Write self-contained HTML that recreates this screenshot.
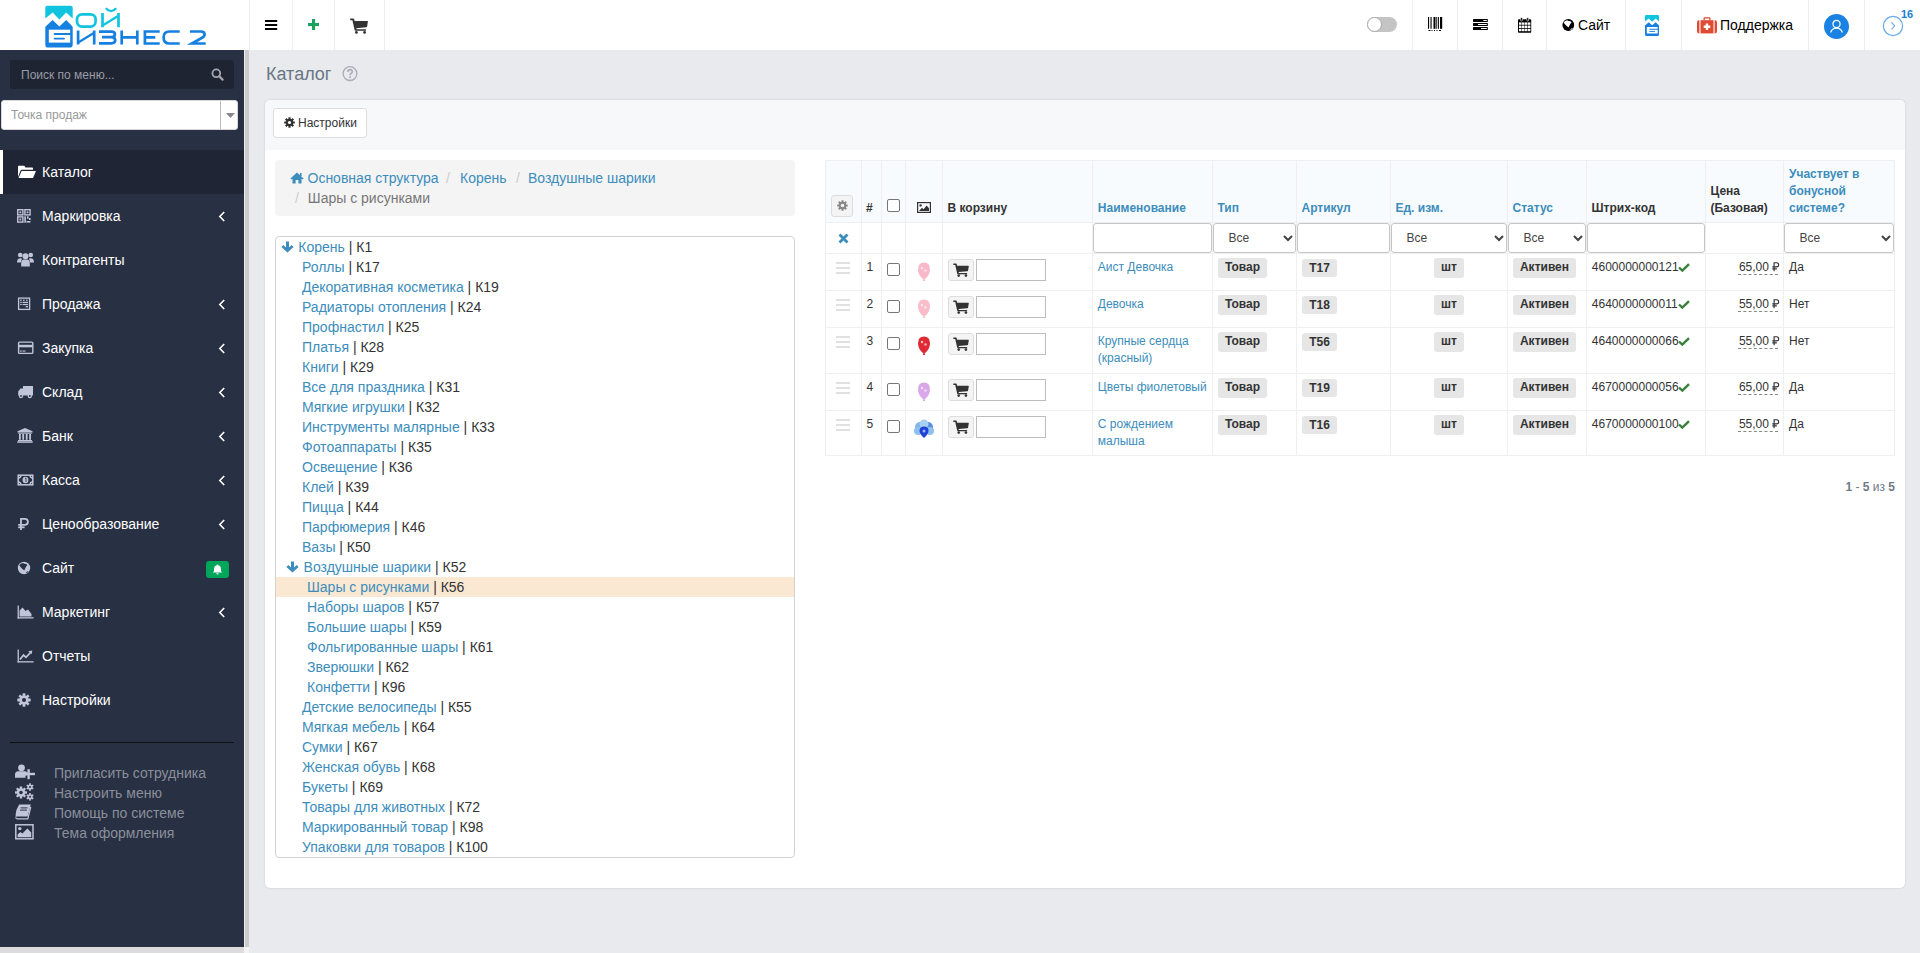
<!DOCTYPE html>
<html><head><meta charset="utf-8">
<style>
*{box-sizing:border-box}
html,body{margin:0;padding:0}
body{width:1920px;height:953px;overflow:hidden;position:relative;background:#e9eaed;font-family:"Liberation Sans",sans-serif;font-size:14px;color:#333}
.abs{position:absolute}
a{color:#3c8dbc;text-decoration:none}
#hdr{position:absolute;left:0;top:0;width:1920px;height:50px;background:#fff}
.vsep{position:absolute;top:0;width:1px;height:50px;background:#eeeeee}
#side{position:absolute;left:0;top:50px;width:244px;height:897px;background:#283043}
#sstrip{position:absolute;left:244px;top:50px;width:5px;height:903px;background:#cbcbcb;border-left:1px solid #eee}
#sbot{position:absolute;left:0;top:947px;width:244px;height:6px;background:#dcdcdc}
#sbot2{position:absolute;left:244px;top:947px;width:5px;height:6px;background:#f4f4f4}
.mi{position:absolute;left:0;width:244px;height:44px;color:#fff;font-size:14px}
.mi .t{position:absolute;left:42px;top:14px;line-height:16px;white-space:nowrap}
.bl{position:absolute;left:54px;font-size:14px;color:#8a8f99;line-height:16px;white-space:nowrap}
#box{position:absolute;left:265px;top:100px;width:1640px;height:788px;background:#fff;border-radius:5px;box-shadow:0 0 2px 0 rgba(40,40,80,.22)}
#boxh{position:absolute;left:0;top:0;width:1640px;height:50px;background:#f7f8fa;border-radius:5px 5px 0 0}
.tr{position:absolute;height:20px;line-height:20px;font-size:14px;white-space:nowrap;color:#333}

</style></head><body>
<div id="hdr">
<svg class="abs" style="left:0;top:0" width="249" height="50" viewBox="0 0 249 50">
 <defs>
  <g id="lgicon">
   <path d="M47.3 5.8 L70.7 5.8 Q72.7 5.8 72.7 7.8 L72.7 18.6 L66.2 12.6 L59.4 19.4 L52.6 12.6 L45.3 18.6 L45.3 7.8 Q45.3 5.8 47.3 5.8Z" fill="#10c4e0"/>
   <path d="M45.3 26.7 L52.6 20.1 L59.4 26.4 L66.2 20.1 L72.7 26.7 L72.7 44.4 Q72.7 47.6 69.5 47.6 L48.5 47.6 Q45.3 47.6 45.3 44.4Z" fill="#1580e0"/>
   <rect x="48.8" y="29.7" width="21.4" height="12.9" fill="#fff"/>
   <path d="M54.6 34 L70.2 34" stroke="#1580e0" stroke-width="2" stroke-linecap="round"/>
   <path d="M70.2 33 L70.2 35" stroke="#1580e0" stroke-width="2"/>
   <path d="M54.6 38.6 L64 38.6" stroke="#1580e0" stroke-width="1.8" stroke-linecap="round"/>
  </g>
 </defs>
 <use href="#lgicon"/>
 <g fill="none" stroke="#10c4e0" stroke-width="2.7">
  <rect x="77" y="14.3" width="18.6" height="12.3" rx="5"/>
  <path d="M102.5 13.1 L102.5 27.3 M118.5 13.1 L118.5 27.3"/>
  <path d="M103 25.3 L118 16" stroke-width="2.3"/>
  <path d="M105.8 8.3 Q111 14 116.2 8.3" stroke-width="2.2"/>
 </g>
 <g fill="none" stroke="#1580e0" stroke-width="2.7">
  <path d="M78.1 30.5 L78.1 44.5 M94.2 30.5 L94.2 44.5"/>
  <path d="M78.6 42.2 L93.8 33" stroke-width="2.2"/>
  <path d="M99 31.7 L111.3 31.7 Q114.9 31.7 114.9 34.5 Q114.9 37.2 111.3 37.2 L102 37.2 M111.3 37.2 Q115.2 37.2 115.2 40.3 Q115.2 43.3 111.3 43.3 L99 43.3"/>
  <path d="M121.7 30.5 L121.7 44.5 M137.3 30.5 L137.3 44.5 M121.7 37.3 L137.3 37.3" />
  <path d="M159.7 31.5 L144.9 31.5 L144.9 43.5 L159.7 43.5 M144.9 37.4 L155.3 37.4"/>
  <path d="M179.7 31.5 L169.5 31.5 Q163.6 31.5 163.6 37.5 Q163.6 43.5 169.5 43.5 L179.7 43.5"/>
  <path d="M190 31.5 L200.8 31.5 Q204.6 31.5 204.6 34.6 Q204.6 36.8 201.2 38.3 L192 43.5 L205.7 43.5"/>
 </g>
</svg>
<div class="vsep" style="left:249px"></div>
<div class="vsep" style="left:292px"></div>
<div class="vsep" style="left:334px"></div>
<div class="vsep" style="left:384px"></div>
<svg class="abs" style="left:265px;top:19px" width="13" height="12" viewBox="0 0 13 12"><g fill="#000"><rect x="0" y="1" width="12.2" height="2"/><rect x="0" y="5" width="12.2" height="2"/><rect x="0" y="9" width="12.2" height="2"/></g></svg>
<svg class="abs" style="left:308px;top:19px" width="11" height="11" viewBox="0 0 11 11"><g fill="#1ba25e"><rect x="4" y="0" width="3.1" height="11.1"/><rect x="0" y="4" width="11.1" height="3.1"/></g></svg>
<svg class="abs" style="left:350px;top:18px" width="18" height="16" viewBox="0 0 18 16"><g fill="#333"><path d="M0.2 0.6 L3.2 0.6 Q4 0.6 4.2 1.4 L4.6 3 L17.5 3 Q18 3 17.9 3.6 L17.1 8.6 Q17 9.3 16.3 9.3 L6.3 10.3 L6.5 11.3 L16 11.3 L16 12.8 L5.5 12.8 Q4.8 12.8 4.6 12 L2.4 2.3 L0.2 2.3Z"/><circle cx="6.4" cy="14.4" r="1.4"/><circle cx="14.6" cy="14.4" r="1.4"/></g></svg>

<!-- right side -->
<div class="abs" style="left:1367px;top:17px;width:30px;height:15px;border-radius:8px;background:#c4c4c4"></div>
<div class="abs" style="left:1367px;top:17px;width:15px;height:15px;border-radius:50%;background:#fff;border:1px solid #aaa"></div>
<div class="vsep" style="left:1412px"></div>
<svg class="abs" style="left:1427px;top:16px" width="17" height="16" viewBox="0 0 17 16"><g fill="#000"><rect x="1" y="1" width="1.1" height="11.8"/><rect x="3.5" y="1" width="1.1" height="11.8"/><rect x="6.5" y="1" width="2" height="11.8"/><rect x="9.3" y="1" width="0.9" height="11.8"/><rect x="11" y="1" width="0.9" height="11.8"/><rect x="13" y="1" width="2.2" height="11.8"/><rect x="1.5" y="14" width="2" height="1"/><rect x="4.5" y="14" width="1" height="1"/><rect x="7" y="14" width="1" height="1"/><rect x="9.5" y="14" width="1" height="1"/><rect x="12" y="14" width="2" height="1"/></g></svg>
<div class="vsep" style="left:1457px"></div>
<svg class="abs" style="left:1473px;top:18px" width="15" height="13" viewBox="0 0 15 13"><g fill="#000"><rect x="0" y="1" width="14.8" height="3" rx="0.5"/><rect x="0" y="5" width="14.8" height="3" rx="0.5"/><rect x="0" y="9" width="14.8" height="3" rx="0.5"/></g><g fill="#fff"><rect x="10.3" y="2" width="3.5" height="1"/><rect x="5" y="6" width="8.8" height="1"/><rect x="8" y="10" width="5.8" height="1"/></g></svg>
<div class="vsep" style="left:1502px"></div>
<svg class="abs" style="left:1518px;top:17px" width="14" height="16" viewBox="0 0 14 16"><rect x="0" y="2.2" width="13.2" height="13.6" rx="0.8" fill="#000"/><g fill="#fff"><rect x="1.0" y="5.4" width="2.5" height="2.4"/><rect x="4.0" y="5.4" width="2.5" height="2.4"/><rect x="6.9" y="5.4" width="2.5" height="2.4"/><rect x="9.9" y="5.4" width="2.5" height="2.4"/><rect x="1.0" y="8.6" width="2.5" height="2.4"/><rect x="4.0" y="8.6" width="2.5" height="2.4"/><rect x="6.9" y="8.6" width="2.5" height="2.4"/><rect x="9.9" y="8.6" width="2.5" height="2.4"/><rect x="1.0" y="11.8" width="2.5" height="2.4"/><rect x="4.0" y="11.8" width="2.5" height="2.4"/><rect x="6.9" y="11.8" width="2.5" height="2.4"/><rect x="9.9" y="11.8" width="2.5" height="2.4"/></g><g fill="#000" stroke="#fff" stroke-width="0.6"><rect x="2.6" y="0.5" width="1.8" height="3.6" rx="0.9"/><rect x="8.8" y="0.5" width="1.8" height="3.6" rx="0.9"/></g></svg>
<div class="vsep" style="left:1546px"></div>
<svg class="abs" style="left:1562px;top:19px" width="13" height="13" viewBox="0 0 13 13"><circle cx="6.3" cy="6" r="5.9" fill="#000"/><path d="M1.6 3.4 Q2.8 1.5 5.2 1.3 L6.4 2 Q8.2 1.7 9.6 3.2 Q8.3 4.6 7.6 6.2 Q7 7.6 6.5 8.6 Q3.8 6.6 1.6 3.4Z M8.3 10.4 Q9.4 9.2 10.7 8.9 Q10.2 10.6 8.6 11Z" fill="#fff"/></svg>
<div class="abs" style="left:1578px;top:17px;font-size:14px;line-height:16px;color:#000">Сайт</div>
<div class="vsep" style="left:1625px"></div>
<svg class="abs" style="left:1645.4px;top:15px" width="14" height="21" viewBox="45.3 5.8 27.4 41.8" preserveAspectRatio="none"><use href="#lgicon"/></svg>
<div class="vsep" style="left:1681px"></div>
<svg class="abs" style="left:1697px;top:17px" width="20" height="17" viewBox="0 0 20 17"><g fill="#df4a32"><path d="M6.5 3.2 L6.5 1.2 Q6.5 0.2 7.5 0.2 L12.5 0.2 Q13.5 0.2 13.5 1.2 L13.5 3.2 L12.2 3.2 L12.2 1.6 L7.8 1.6 L7.8 3.2Z"/><path d="M2.4 3.2 L2.4 16.4 L1.8 16.4 Q0 16.4 0 14 L0 5.6 Q0 3.2 1.8 3.2Z"/><path d="M17.6 3.2 L17.6 16.4 L18.2 16.4 Q20 16.4 20 14 L20 5.6 Q20 3.2 18.2 3.2Z"/><path d="M3.5 3.2 L16.5 3.2 L16.5 16.4 L3.5 16.4Z"/></g><path d="M8.8 6.5 L11.2 6.5 L11.2 8.6 L13.3 8.6 L13.3 11 L11.2 11 L11.2 13.1 L8.8 13.1 L8.8 11 L6.7 11 L6.7 8.6 L8.8 8.6Z" fill="#fff"/></svg>
<div class="abs" style="left:1720px;top:17px;font-size:14px;line-height:16px;color:#000">Поддержка</div>
<div class="vsep" style="left:1808px"></div>
<div class="abs" style="left:1824px;top:14px;width:25px;height:25px;border-radius:50%;background:#1a82e2"></div>
<svg class="abs" style="left:1829px;top:19px" width="15" height="15" viewBox="0 0 15 15"><circle cx="7.5" cy="5" r="3.6" fill="none" stroke="#fff" stroke-width="1.2"/><path d="M1.6 13.5 Q3 9.2 7.5 9.2 Q12 9.2 13.4 13.5" fill="none" stroke="#fff" stroke-width="1.2"/></svg>
<div class="vsep" style="left:1864px"></div>
<svg class="abs" style="left:1882px;top:15px" width="22" height="22" viewBox="0 0 22 22"><circle cx="11" cy="11" r="9.6" fill="none" stroke="#6aa9e6" stroke-width="1.2"/><path d="M9.5 7.3 L12.7 10.8 L9.5 14.3" fill="none" stroke="#6aa9e6" stroke-width="1.1"/></svg>
<div class="abs" style="left:1901px;top:8px;font-size:11px;line-height:12px;font-weight:bold;color:#1a7fd9">16</div>
</div>

<div id="side">
<div class="abs" style="left:10px;top:10px;width:224px;height:29px;background:#1f2433;border-radius:3px">
 <div class="abs" style="left:11px;top:8px;font-size:12px;line-height:14px;color:#9a9ca3">Поиск по меню...</div>
 <svg class="abs" style="left:201px;top:8px" width="13" height="13" viewBox="0 0 13 13"><circle cx="5.3" cy="5.3" r="3.9" fill="none" stroke="#a3a6ae" stroke-width="1.8"/><path d="M8.2 8.2 L11.6 11.6" stroke="#a3a6ae" stroke-width="2.2" stroke-linecap="round"/></svg>
</div>
<div class="abs" style="left:1px;top:50px;width:237px;height:30px;background:#fff;border-radius:3px;border:1px solid #d8d8d8">
 <div class="abs" style="left:9px;top:7px;font-size:12px;line-height:14px;color:#999">Точка продаж</div>
 <div class="abs" style="left:218px;top:0px;width:1px;height:28px;background:#bbb"></div>
 <svg class="abs" style="left:224px;top:12px" width="9" height="5" viewBox="0 0 9 5"><path d="M0 0 L9 0 L4.5 5Z" fill="#888"/></svg>
</div>
</div>

<div style="position:absolute;left:0;top:0"><div class="mi" style="top:150px;background:#1f2535;"><div class="abs" style="left:0;top:0;width:3px;height:44px;background:#fff"></div><svg width="20" height="16" viewBox="0 0 20 16" style="position:absolute;left:17px;top:14px"><path d="M1 2.5 L1 13 L3.6 6.6 Q4 5.8 5 5.8 L16 5.8 L16 4.3 Q16 3.5 15.2 3.5 L8.5 3.5 L7.3 1.8 L1.8 1.8 Q1 1.8 1 2.5Z" fill="#fff"/><path d="M4.6 7 L19 7 L16 14 L1.6 14Z" fill="#fff"/></svg><div class="t">Каталог</div></div>
<div class="mi" style="top:194px;"><svg width="14" height="14" viewBox="0 0 14 14" style="position:absolute;left:17px;top:15px"><g fill="none" stroke="#c1c5d9" stroke-width="1.4"><rect x="0.7" y="0.7" width="5.2" height="5.2"/><rect x="7.9" y="0.7" width="5.2" height="5.2"/><rect x="0.7" y="7.9" width="5.2" height="5.2"/></g><g fill="#c1c5d9"><rect x="2.4" y="2.4" width="1.8" height="1.8"/><rect x="9.6" y="2.4" width="1.8" height="1.8"/><rect x="2.4" y="9.6" width="1.8" height="1.8"/><rect x="7.3" y="7.3" width="1.6" height="6.4"/><rect x="10" y="7.3" width="1.6" height="2.5"/><rect x="12" y="9" width="1.6" height="2"/><rect x="9.5" y="12" width="4" height="1.6"/></g></svg><div class="t">Маркировка</div><svg class="abs" style="left:218px;top:17px" width="8" height="11" viewBox="0 0 8 11"><path d="M6.2 1 L1.8 5.5 L6.2 10" fill="none" stroke="#fff" stroke-width="1.6"/></svg></div>
<div class="mi" style="top:238px;"><svg width="17" height="15" viewBox="0 0 17 15" style="position:absolute;left:17px;top:14px"><g fill="#c1c5d9"><circle cx="3.2" cy="3" r="2.3"/><circle cx="13.8" cy="3" r="2.3"/><circle cx="8.5" cy="4.2" r="3"/><path d="M0 10.5 Q0 6.2 3.5 6.2 Q4.6 6.2 5.2 6.8 Q4 8 4.2 10.5Z"/><path d="M17 10.5 Q17 6.2 13.5 6.2 Q12.4 6.2 11.8 6.8 Q13 8 12.8 10.5Z"/><path d="M4.2 14.5 L4.2 11.5 Q4.2 7.6 7 7.6 L10 7.6 Q12.8 7.6 12.8 11.5 L12.8 14.5Z"/></g></svg><div class="t">Контрагенты</div></div>
<div class="mi" style="top:282px;"><svg width="14" height="14" viewBox="0 0 14 14" style="position:absolute;left:17px;top:15px"><rect x="1.6" y="1.1" width="11" height="11.3" fill="none" stroke="#c1c5d9" stroke-width="1.3"/><g fill="#c1c5d9"><rect x="3.2" y="2.6" width="1.6" height="1.2"/><rect x="6" y="2.6" width="1.6" height="1.2"/><rect x="9" y="2.6" width="1.6" height="1.2"/><rect x="3.2" y="4.8" width="1.5" height="1.2"/><rect x="5.5" y="4.8" width="5.5" height="1.2"/><rect x="3.2" y="6.9" width="1.5" height="1.2"/><rect x="5.5" y="6.9" width="5.5" height="1.2"/><rect x="8.6" y="9" width="2.4" height="1.3"/></g></svg><div class="t">Продажа</div><svg class="abs" style="left:218px;top:17px" width="8" height="11" viewBox="0 0 8 11"><path d="M6.2 1 L1.8 5.5 L6.2 10" fill="none" stroke="#fff" stroke-width="1.6"/></svg></div>
<div class="mi" style="top:326px;"><svg width="17" height="14" viewBox="0 0 17 14" style="position:absolute;left:17px;top:15px"><rect x="1.6" y="1.1" width="14.2" height="11.3" rx="1" fill="none" stroke="#c1c5d9" stroke-width="1.4"/><rect x="1.6" y="3.8" width="14.2" height="2.5" fill="#c1c5d9"/><rect x="3" y="9.5" width="1.8" height="1.1" fill="#c1c5d9"/><rect x="5.5" y="9.5" width="3" height="1.1" fill="#c1c5d9"/></svg><div class="t">Закупка</div><svg class="abs" style="left:218px;top:17px" width="8" height="11" viewBox="0 0 8 11"><path d="M6.2 1 L1.8 5.5 L6.2 10" fill="none" stroke="#fff" stroke-width="1.6"/></svg></div>
<div class="mi" style="top:370px;"><svg width="17" height="14" viewBox="0 0 17 14" style="position:absolute;left:17px;top:15px"><g fill="#c1c5d9"><path d="M6 1 L16 1 L16 10.5 L6 10.5Z"/><path d="M1.2 6.5 L3.4 3.4 L6 3.4 L6 10.5 L1.2 10.5Z"/><circle cx="4" cy="11" r="2.2"/><circle cx="12.8" cy="11" r="2.2"/></g><circle cx="4" cy="11" r="0.9" fill="#283043"/><circle cx="12.8" cy="11" r="0.9" fill="#283043"/></svg><div class="t">Склад</div><svg class="abs" style="left:218px;top:17px" width="8" height="11" viewBox="0 0 8 11"><path d="M6.2 1 L1.8 5.5 L6.2 10" fill="none" stroke="#fff" stroke-width="1.6"/></svg></div>
<div class="mi" style="top:414px;"><svg width="16" height="15" viewBox="0 0 16 15" style="position:absolute;left:17px;top:14px"><g fill="#c1c5d9"><path d="M8 0 L15.5 3.2 L15.5 4.4 L0.5 4.4 L0.5 3.2Z"/><rect x="1.2" y="4.8" width="13.6" height="0.9"/><rect x="2" y="6" width="1.8" height="5.8"/><rect x="5.3" y="6" width="1.8" height="5.8"/><rect x="8.8" y="6" width="1.8" height="5.8"/><rect x="12.2" y="6" width="1.8" height="5.8"/><rect x="1" y="12" width="14" height="1"/><rect x="0.3" y="13.3" width="15.4" height="1.5"/></g></svg><div class="t">Банк</div><svg class="abs" style="left:218px;top:17px" width="8" height="11" viewBox="0 0 8 11"><path d="M6.2 1 L1.8 5.5 L6.2 10" fill="none" stroke="#fff" stroke-width="1.6"/></svg></div>
<div class="mi" style="top:458px;"><svg width="17" height="13" viewBox="0 0 17 13" style="position:absolute;left:17px;top:16px"><rect x="1.2" y="1.2" width="14.6" height="9.6" fill="none" stroke="#c1c5d9" stroke-width="1.5"/><path d="M1.2 4 Q4 4 4 1.2 M13 1.2 Q13 4 15.8 4 M1.2 8 Q4 8 4 10.8 M13 10.8 Q13 8 15.8 8" fill="none" stroke="#c1c5d9" stroke-width="1.3"/><ellipse cx="8.5" cy="6" rx="2.9" ry="3.3" fill="#c1c5d9"/><path d="M8 4.5 L9 4 L9 8" stroke="#283043" stroke-width="0.9" fill="none"/></svg><div class="t">Касса</div><svg class="abs" style="left:218px;top:17px" width="8" height="11" viewBox="0 0 8 11"><path d="M6.2 1 L1.8 5.5 L6.2 10" fill="none" stroke="#fff" stroke-width="1.6"/></svg></div>
<div class="mi" style="top:502px;"><svg width="14" height="15" viewBox="0 0 14 15" style="position:absolute;left:17px;top:15px"><g fill="none" stroke="#c1c5d9" stroke-width="1.8"><path d="M4 13 L4 1.8 L7.9 1.8 Q10.9 1.8 10.9 4.8 Q10.9 7.8 7.9 7.8 L1.2 7.8"/><path d="M1.2 10.3 L7.6 10.3"/></g></svg><div class="t">Ценообразование</div><svg class="abs" style="left:218px;top:17px" width="8" height="11" viewBox="0 0 8 11"><path d="M6.2 1 L1.8 5.5 L6.2 10" fill="none" stroke="#fff" stroke-width="1.6"/></svg></div>
<div class="mi" style="top:546px;"><svg width="14" height="14" viewBox="0 0 14 14" style="position:absolute;left:17px;top:15px"><circle cx="7" cy="7" r="6.2" fill="#c1c5d9"/><path d="M2.2 4.3 Q3.4 2.3 6 2 L7.2 2.8 Q9 2.5 10.4 4 Q9 5.5 8.3 7.2 Q7.7 8.6 7.2 9.6 Q4.4 7.6 2.2 4.3Z M9 11.5 Q10.2 10.2 11.6 9.9 Q11 11.6 9.4 12.1Z" fill="#283043"/></svg><div class="t">Сайт</div><div class="abs" style="left:206px;top:15px;width:23px;height:17px;background:#00a65a;border-radius:3px"><svg class="abs" style="left:6px;top:3px" width="11" height="11" viewBox="0 0 11 11"><path d="M5.5 0.5 Q6.3 0.5 6.3 1.3 Q9 1.9 9 5.2 L9 7.3 L10.3 8.6 L0.7 8.6 L2 7.3 L2 5.2 Q2 1.9 4.7 1.3 Q4.7 0.5 5.5 0.5Z M4.3 9.3 L6.7 9.3 Q6.6 10.6 5.5 10.6 Q4.4 10.6 4.3 9.3Z" fill="#fff"/></svg></div></div>
<div class="mi" style="top:590px;"><svg width="17" height="14" viewBox="0 0 17 14" style="position:absolute;left:17px;top:15px"><g fill="#c1c5d9"><rect x="0.6" y="0.5" width="1.3" height="13"/><rect x="0.6" y="12.2" width="16" height="1.3"/><path d="M2.6 11.5 L2.6 5.5 L5.5 2.5 L8.5 6 L11 4.5 L14.5 9 L14.5 11.5Z"/></g></svg><div class="t">Маркетинг</div><svg class="abs" style="left:218px;top:17px" width="8" height="11" viewBox="0 0 8 11"><path d="M6.2 1 L1.8 5.5 L6.2 10" fill="none" stroke="#fff" stroke-width="1.6"/></svg></div>
<div class="mi" style="top:634px;"><svg width="17" height="14" viewBox="0 0 17 14" style="position:absolute;left:17px;top:15px"><g fill="#c1c5d9"><rect x="0.6" y="0.5" width="1.3" height="13"/><rect x="0.6" y="12.2" width="16" height="1.3"/></g><path d="M3 10.5 L6.5 6 L9 8.3 L14 3" fill="none" stroke="#c1c5d9" stroke-width="1.8"/><path d="M11.3 2.2 L15.3 1.4 L14.6 5.3Z" fill="#c1c5d9"/></svg><div class="t">Отчеты</div></div>
<div class="mi" style="top:678px;"><svg width="14" height="14" viewBox="0 0 14 14" style="position:absolute;left:17px;top:15px"><g fill="#c1c5d9"><circle cx="7" cy="7" r="4.6"/><g id="tth"><rect x="5.6" y="0.3" width="2.8" height="13.4" rx="0.5"/></g><rect x="5.6" y="0.3" width="2.8" height="13.4" rx="0.5" transform="rotate(45 7 7)"/><rect x="5.6" y="0.3" width="2.8" height="13.4" rx="0.5" transform="rotate(90 7 7)"/><rect x="5.6" y="0.3" width="2.8" height="13.4" rx="0.5" transform="rotate(135 7 7)"/></g><circle cx="7" cy="7" r="2.1" fill="#283043"/></svg><div class="t">Настройки</div></div></div>
<div class="abs" style="left:10px;top:742px;width:224px;height:1px;background:#111"></div>
<svg class="abs" style="left:15px;top:764px" width="21" height="16" viewBox="0 0 21 16"><g fill="#c1c5d9"><circle cx="6.5" cy="3.8" r="3.4"/><path d="M0 13.8 L0 11 Q0 7.3 3.3 7.3 L9.7 7.3 Q11.5 7.3 12.3 8.5 L12.3 11.6 L10.5 11.6 L10.5 13.8 Z"/><rect x="12.4" y="5.2" width="2.4" height="10"/><rect x="9" y="8.8" width="11" height="2.4"/></g></svg>
<svg class="abs" style="left:15px;top:783px" width="19" height="18" viewBox="0 0 19 18"><g fill="#c1c5d9"><g transform="translate(6 9.5)"><circle r="4.2"/><rect x="-1.2" y="-6" width="2.4" height="12"/><rect x="-1.2" y="-6" width="2.4" height="12" transform="rotate(45)"/><rect x="-1.2" y="-6" width="2.4" height="12" transform="rotate(90)"/><rect x="-1.2" y="-6" width="2.4" height="12" transform="rotate(135)"/></g><g transform="translate(15 4)"><circle r="2.6"/><rect x="-0.8" y="-3.8" width="1.6" height="7.6"/><rect x="-0.8" y="-3.8" width="1.6" height="7.6" transform="rotate(60)"/><rect x="-0.8" y="-3.8" width="1.6" height="7.6" transform="rotate(120)"/></g><g transform="translate(15 13.8)"><circle r="2.6"/><rect x="-0.8" y="-3.8" width="1.6" height="7.6"/><rect x="-0.8" y="-3.8" width="1.6" height="7.6" transform="rotate(60)"/><rect x="-0.8" y="-3.8" width="1.6" height="7.6" transform="rotate(120)"/></g></g><circle cx="6" cy="9.5" r="1.8" fill="#283043"/><circle cx="15" cy="4" r="1" fill="#283043"/><circle cx="15" cy="13.8" r="1" fill="#283043"/></svg>
<svg class="abs" style="left:15px;top:804px" width="17" height="16" viewBox="0 0 17 16"><path d="M4.2 0.6 L15.8 0.6 L12.6 12.6 L2.2 12.6 Q1 12.6 0.8 13.6 L0.6 14 Q0.6 9 1.4 6Z" fill="#c1c5d9"/><path d="M0.8 13.6 Q0.8 14.8 2.2 14.8 L12.8 14.8 L15.8 3" fill="none" stroke="#c1c5d9" stroke-width="1.2"/><rect x="5.6" y="3.4" width="7" height="1" fill="#283043"/><rect x="5" y="5.6" width="7" height="1" fill="#283043"/></svg>
<svg class="abs" style="left:15px;top:824px" width="19" height="16" viewBox="0 0 19 16"><rect x="0.8" y="0.8" width="17.2" height="14" fill="none" stroke="#c1c5d9" stroke-width="1.5"/><circle cx="4.8" cy="4.6" r="1.7" fill="#c1c5d9"/><path d="M2.6 13.2 L2.6 10.4 L5.4 8 L7.4 9.6 L12.4 4.6 L16.2 8.6 L16.2 13.2Z" fill="#c1c5d9"/></svg>
<div class="bl" style="top:765px">Пригласить сотрудника</div>
<div class="bl" style="top:785px">Настроить меню</div>
<div class="bl" style="top:805px">Помощь по системе</div>
<div class="bl" style="top:825px">Тема оформления</div>

<div id="sstrip"></div><div id="sbot"></div><div id="sbot2"></div>
<div class="abs" style="left:266px;top:64px;font-size:18px;line-height:20px;color:#697685">Каталог</div>
<svg class="abs" style="left:342px;top:66px" width="16" height="16" viewBox="0 0 16 16"><circle cx="8" cy="7.6" r="6.9" fill="none" stroke="#a9acb6" stroke-width="1.3"/><path d="M5.8 5.9 Q5.8 3.6 8 3.6 Q10.3 3.6 10.3 5.7 Q10.3 7 8.9 7.6 Q8 8 8 9.2" fill="none" stroke="#a9acb6" stroke-width="1.6"/><rect x="7.1" y="10.3" width="1.8" height="1.7" fill="#a9acb6"/></svg>
<div id="box"><div id="boxh"></div></div>
<div class="abs" style="left:273px;top:108px;width:94px;height:30px;background:#fff;border:1px solid #ddd;border-radius:3px"></div>
<svg class="abs" style="left:284px;top:117px" width="11" height="11" viewBox="0 0 14 14"><g fill="#333"><circle cx="7" cy="7" r="4.8"/><rect x="5.6" y="0.2" width="2.8" height="13.6" rx="0.4"/><rect x="5.6" y="0.2" width="2.8" height="13.6" rx="0.4" transform="rotate(45 7 7)"/><rect x="5.6" y="0.2" width="2.8" height="13.6" rx="0.4" transform="rotate(90 7 7)"/><rect x="5.6" y="0.2" width="2.8" height="13.6" rx="0.4" transform="rotate(135 7 7)"/></g><circle cx="7" cy="7" r="2" fill="#fff"/></svg>
<div class="abs" style="left:298px;top:116px;font-size:12px;line-height:14px;color:#333">Настройки</div>
<div class="abs" style="left:275px;top:160px;width:520px;height:56px;background:#f4f4f4;border-radius:4px"></div>
<svg class="abs" style="left:290px;top:172px" width="14" height="12" viewBox="0 0 14 12"><path d="M7 0.6 L13.6 6.4 L12.6 7.5 L11.5 6.6 L11.5 11.6 L8.4 11.6 L8.4 8 L5.6 8 L5.6 11.6 L2.5 11.6 L2.5 6.6 L1.4 7.5 L0.4 6.4Z" fill="#3c8dbc"/><rect x="10" y="1" width="1.6" height="3" fill="#3c8dbc"/></svg>
<div class="abs" style="left:307.5px;top:168px;font-size:14px;line-height:20px;color:#3c8dbc;white-space:nowrap;">Основная структура</div>
<div class="abs" style="left:446px;top:168px;font-size:14px;line-height:20px;color:#ccc;white-space:nowrap;">/</div>
<div class="abs" style="left:460px;top:168px;font-size:14px;line-height:20px;color:#3c8dbc;white-space:nowrap;">Корень</div>
<div class="abs" style="left:516px;top:168px;font-size:14px;line-height:20px;color:#ccc;white-space:nowrap;">/</div>
<div class="abs" style="left:528px;top:168px;font-size:14px;line-height:20px;color:#3c8dbc;white-space:nowrap;">Воздушные шарики</div>
<div class="abs" style="left:295px;top:188px;font-size:14px;line-height:20px;color:#ccc;white-space:nowrap;">/</div>
<div class="abs" style="left:307.8px;top:188px;font-size:14px;line-height:20px;color:#777;white-space:nowrap;">Шары с рисунками</div>
<div class="abs" style="left:275px;top:236px;width:520px;height:622px;border:1px solid #d2d2d2;border-radius:4px;background:#fff"></div>
<svg class="abs" style="left:281.3px;top:241px" width="13" height="12" viewBox="0 0 13 12"><path d="M5 0.6 L8 0.6 L8 6.6 L10.6 4 L12.6 6 L6.5 11.6 L0.4 6 L2.4 4 L5 6.6Z" fill="#3c8dbc"/></svg>
<div class="tr" style="left:298.3px;top:237px"><span style="color:#3c8dbc">Корень</span> | К1</div>
<div class="tr" style="left:302px;top:257px"><span style="color:#3c8dbc">Роллы</span> | К17</div>
<div class="tr" style="left:302px;top:277px"><span style="color:#3c8dbc">Декоративная косметика</span> | К19</div>
<div class="tr" style="left:302px;top:297px"><span style="color:#3c8dbc">Радиаторы отопления</span> | К24</div>
<div class="tr" style="left:302px;top:317px"><span style="color:#3c8dbc">Профнастил</span> | К25</div>
<div class="tr" style="left:302px;top:337px"><span style="color:#3c8dbc">Платья</span> | К28</div>
<div class="tr" style="left:302px;top:357px"><span style="color:#3c8dbc">Книги</span> | К29</div>
<div class="tr" style="left:302px;top:377px"><span style="color:#3c8dbc">Все для праздника</span> | К31</div>
<div class="tr" style="left:302px;top:397px"><span style="color:#3c8dbc">Мягкие игрушки</span> | К32</div>
<div class="tr" style="left:302px;top:417px"><span style="color:#3c8dbc">Инструменты малярные</span> | К33</div>
<div class="tr" style="left:302px;top:437px"><span style="color:#3c8dbc">Фотоаппараты</span> | К35</div>
<div class="tr" style="left:302px;top:457px"><span style="color:#3c8dbc">Освещение</span> | К36</div>
<div class="tr" style="left:302px;top:477px"><span style="color:#3c8dbc">Клей</span> | К39</div>
<div class="tr" style="left:302px;top:497px"><span style="color:#3c8dbc">Пицца</span> | К44</div>
<div class="tr" style="left:302px;top:517px"><span style="color:#3c8dbc">Парфюмерия</span> | К46</div>
<div class="tr" style="left:302px;top:537px"><span style="color:#3c8dbc">Вазы</span> | К50</div>
<svg class="abs" style="left:285.6px;top:561px" width="13" height="12" viewBox="0 0 13 12"><path d="M5 0.6 L8 0.6 L8 6.6 L10.6 4 L12.6 6 L6.5 11.6 L0.4 6 L2.4 4 L5 6.6Z" fill="#3c8dbc"/></svg>
<div class="tr" style="left:303.6px;top:557px"><span style="color:#3c8dbc">Воздушные шарики</span> | К52</div>
<div class="abs" style="left:276px;top:577px;width:518px;height:20px;background:#fbe8d3"></div>
<div class="tr" style="left:307px;top:577px"><span style="color:#3c8dbc">Шары с рисунками</span> | К56</div>
<div class="tr" style="left:307px;top:597px"><span style="color:#3c8dbc">Наборы шаров</span> | К57</div>
<div class="tr" style="left:307px;top:617px"><span style="color:#3c8dbc">Большие шары</span> | К59</div>
<div class="tr" style="left:307px;top:637px"><span style="color:#3c8dbc">Фольгированные шары</span> | К61</div>
<div class="tr" style="left:307px;top:657px"><span style="color:#3c8dbc">Зверюшки</span> | К62</div>
<div class="tr" style="left:307px;top:677px"><span style="color:#3c8dbc">Конфетти</span> | К96</div>
<div class="tr" style="left:302px;top:697px"><span style="color:#3c8dbc">Детские велосипеды</span> | К55</div>
<div class="tr" style="left:302px;top:717px"><span style="color:#3c8dbc">Мягкая мебель</span> | К64</div>
<div class="tr" style="left:302px;top:737px"><span style="color:#3c8dbc">Сумки</span> | К67</div>
<div class="tr" style="left:302px;top:757px"><span style="color:#3c8dbc">Женская обувь</span> | К68</div>
<div class="tr" style="left:302px;top:777px"><span style="color:#3c8dbc">Букеты</span> | К69</div>
<div class="tr" style="left:302px;top:797px"><span style="color:#3c8dbc">Товары для животных</span> | К72</div>
<div class="tr" style="left:302px;top:817px"><span style="color:#3c8dbc">Маркированный товар</span> | К98</div>
<div class="tr" style="left:302px;top:837px"><span style="color:#3c8dbc">Упаковки для товаров</span> | К100</div>
<div class="abs" style="left:825px;top:160px;width:1070px;height:62px;background:#f8fbfe"></div>
<div class="abs" style="left:825px;top:160px;width:1px;height:296px;background:#efefef"></div>
<div class="abs" style="left:861px;top:160px;width:1px;height:296px;background:#efefef"></div>
<div class="abs" style="left:881px;top:160px;width:1px;height:296px;background:#efefef"></div>
<div class="abs" style="left:905px;top:160px;width:1px;height:296px;background:#efefef"></div>
<div class="abs" style="left:942px;top:160px;width:1px;height:296px;background:#efefef"></div>
<div class="abs" style="left:1092px;top:160px;width:1px;height:296px;background:#efefef"></div>
<div class="abs" style="left:1212px;top:160px;width:1px;height:296px;background:#efefef"></div>
<div class="abs" style="left:1296px;top:160px;width:1px;height:296px;background:#efefef"></div>
<div class="abs" style="left:1390px;top:160px;width:1px;height:296px;background:#efefef"></div>
<div class="abs" style="left:1507px;top:160px;width:1px;height:296px;background:#efefef"></div>
<div class="abs" style="left:1586px;top:160px;width:1px;height:296px;background:#efefef"></div>
<div class="abs" style="left:1705px;top:160px;width:1px;height:296px;background:#efefef"></div>
<div class="abs" style="left:1783px;top:160px;width:1px;height:296px;background:#efefef"></div>
<div class="abs" style="left:1894px;top:160px;width:1px;height:296px;background:#efefef"></div>
<div class="abs" style="left:825px;top:160px;width:1070px;height:1px;background:#efefef"></div>
<div class="abs" style="left:825px;top:222px;width:1070px;height:1px;background:#efefef"></div>
<div class="abs" style="left:825px;top:253px;width:1070px;height:1px;background:#efefef"></div>
<div class="abs" style="left:825px;top:290px;width:1070px;height:1px;background:#efefef"></div>
<div class="abs" style="left:825px;top:327px;width:1070px;height:1px;background:#efefef"></div>
<div class="abs" style="left:825px;top:373px;width:1070px;height:1px;background:#efefef"></div>
<div class="abs" style="left:825px;top:410px;width:1070px;height:1px;background:#efefef"></div>
<div class="abs" style="left:825px;top:455px;width:1070px;height:1px;background:#efefef"></div>
<div class="abs" style="left:831px;top:195px;width:22px;height:22px;background:#f4f4f4;border:1px solid #ddd;border-radius:3px"></div>
<svg class="abs" style="left:837px;top:200px" width="11" height="11" viewBox="0 0 14 14"><g fill="#888"><circle cx="7" cy="7" r="4.8"/><rect x="5.7" y="0.3" width="2.6" height="13.4" rx="0.4"/><rect x="5.7" y="0.3" width="2.6" height="13.4" rx="0.4" transform="rotate(45 7 7)"/><rect x="5.7" y="0.3" width="2.6" height="13.4" rx="0.4" transform="rotate(90 7 7)"/><rect x="5.7" y="0.3" width="2.6" height="13.4" rx="0.4" transform="rotate(135 7 7)"/></g><circle cx="7" cy="7" r="2.2" fill="#f4f4f4"/></svg>
<div class="abs" style="left:866px;top:200px;font-size:12px;line-height:17px;color:#333;white-space:nowrap;font-weight:bold">#</div>
<div class="abs" style="left:887px;top:199px;width:13px;height:13px;border:1px solid #767676;border-radius:2px;background:#fff"></div>
<svg class="abs" style="left:917px;top:202px" width="14" height="11" viewBox="0 0 14 11"><rect x="0.6" y="0.6" width="12.8" height="9.8" fill="none" stroke="#333" stroke-width="1.2"/><circle cx="3.6" cy="3.4" r="1.2" fill="#333"/><path d="M2 9 L5 5.8 L6.6 7.2 L9.6 3.6 L12 6.2 L12 9Z" fill="#333"/></svg>
<div class="abs" style="left:947.5px;top:200px;font-size:12px;line-height:17px;color:#333;white-space:nowrap;font-weight:bold">В корзину</div>
<div class="abs" style="left:1097.8px;top:200px;font-size:12px;line-height:17px;color:#3c8dbc;white-space:nowrap;font-weight:bold">Наименование</div>
<div class="abs" style="left:1217.5px;top:200px;font-size:12px;line-height:17px;color:#3c8dbc;white-space:nowrap;font-weight:bold">Тип</div>
<div class="abs" style="left:1301.5px;top:200px;font-size:12px;line-height:17px;color:#3c8dbc;white-space:nowrap;font-weight:bold">Артикул</div>
<div class="abs" style="left:1395.5px;top:200px;font-size:12px;line-height:17px;color:#3c8dbc;white-space:nowrap;font-weight:bold">Ед. изм.</div>
<div class="abs" style="left:1512.5px;top:200px;font-size:12px;line-height:17px;color:#3c8dbc;white-space:nowrap;font-weight:bold">Статус</div>
<div class="abs" style="left:1591.5px;top:200px;font-size:12px;line-height:17px;color:#333;white-space:nowrap;font-weight:bold">Штрих-код</div>
<div class="abs" style="left:1710.5px;top:183px;font-size:12px;line-height:17px;color:#333;white-space:nowrap;font-weight:bold">Цена<br>(Базовая)</div>
<div class="abs" style="left:1789px;top:166px;font-size:12px;line-height:17px;color:#3c8dbc;white-space:nowrap;font-weight:bold">Участвует в<br>бонусной<br>системе?</div>
<svg class="abs" style="left:838px;top:233px" width="11" height="11" viewBox="0 0 11 11"><path d="M1.5 1.5 L9.5 9.5 M9.5 1.5 L1.5 9.5" stroke="#3c8dbc" stroke-width="2.8"/></svg>
<div class="abs" style="left:1093px;top:223px;width:119px;height:30px;border:1px solid #c6c6c6;border-radius:3px;background:#fff"></div>
<div class="abs" style="left:1213px;top:223px;width:83px;height:30px;border:1px solid #c6c6c6;border-radius:3px;background:#fff"></div>
<div class="abs" style="left:1228.5px;top:230px;font-size:12px;line-height:17px;color:#444;white-space:nowrap;">Все</div>
<svg class="abs" style="left:1283px;top:235px" width="10" height="7" viewBox="0 0 10 7"><path d="M1 1 L5 5 L9 1" fill="none" stroke="#444" stroke-width="2"/></svg>
<div class="abs" style="left:1297px;top:223px;width:93px;height:30px;border:1px solid #c6c6c6;border-radius:3px;background:#fff"></div>
<div class="abs" style="left:1391px;top:223px;width:116px;height:30px;border:1px solid #c6c6c6;border-radius:3px;background:#fff"></div>
<div class="abs" style="left:1406.5px;top:230px;font-size:12px;line-height:17px;color:#444;white-space:nowrap;">Все</div>
<svg class="abs" style="left:1494px;top:235px" width="10" height="7" viewBox="0 0 10 7"><path d="M1 1 L5 5 L9 1" fill="none" stroke="#444" stroke-width="2"/></svg>
<div class="abs" style="left:1508px;top:223px;width:78px;height:30px;border:1px solid #c6c6c6;border-radius:3px;background:#fff"></div>
<div class="abs" style="left:1523.5px;top:230px;font-size:12px;line-height:17px;color:#444;white-space:nowrap;">Все</div>
<svg class="abs" style="left:1573px;top:235px" width="10" height="7" viewBox="0 0 10 7"><path d="M1 1 L5 5 L9 1" fill="none" stroke="#444" stroke-width="2"/></svg>
<div class="abs" style="left:1587px;top:223px;width:118px;height:30px;border:1px solid #c6c6c6;border-radius:3px;background:#fff"></div>
<div class="abs" style="left:1784px;top:223px;width:110px;height:30px;border:1px solid #c6c6c6;border-radius:3px;background:#fff"></div>
<div class="abs" style="left:1799.5px;top:230px;font-size:12px;line-height:17px;color:#444;white-space:nowrap;">Все</div>
<svg class="abs" style="left:1881px;top:235px" width="10" height="7" viewBox="0 0 10 7"><path d="M1 1 L5 5 L9 1" fill="none" stroke="#444" stroke-width="2"/></svg>
<div class="abs" style="left:836px;top:262px;width:14px;height:2px;background:#e0e0e0"></div>
<div class="abs" style="left:836px;top:267px;width:14px;height:2px;background:#e0e0e0"></div>
<div class="abs" style="left:836px;top:272px;width:14px;height:2px;background:#e0e0e0"></div>
<div class="abs" style="left:866.5px;top:259px;font-size:12px;line-height:17px;color:#333;white-space:nowrap;">1</div>
<div class="abs" style="left:887px;top:263px;width:13px;height:13px;border:1px solid #767676;border-radius:2px;background:#fff"></div>
<svg class="abs" style="left:914px;top:261px" width="20" height="22" viewBox="0 0 20 22"><path d="M10 1.5 Q16 1.5 16 8.5 Q16 14 10.6 18.5 L11.2 20 L8.8 20 L9.4 18.5 Q4 14 4 8.5 Q4 1.5 10 1.5Z" fill="#f8b8c8"/><circle cx="8" cy="7" r="1.2" fill="#fff" opacity=".7"/><circle cx="11.5" cy="9.5" r="1.3" fill="#fff" opacity=".6"/></svg>
<div class="abs" style="left:948px;top:259px;width:26px;height:22px;background:#f4f4f4;border:1px solid #ddd;border-radius:3px"></div>
<svg class="abs" style="left:953px;top:263px" width="16" height="14" viewBox="0 0 18 16"><g fill="#333"><path d="M0.2 0.6 L3.2 0.6 Q4 0.6 4.2 1.4 L4.6 3 L17.5 3 Q18 3 17.9 3.6 L17.1 8.6 Q17 9.3 16.3 9.3 L6.3 10.3 L6.5 11.3 L16 11.3 L16 12.8 L5.5 12.8 Q4.8 12.8 4.6 12 L2.4 2.3 L0.2 2.3Z"/><circle cx="6.4" cy="14.4" r="1.5"/><circle cx="14.6" cy="14.4" r="1.5"/></g></svg>
<div class="abs" style="left:976px;top:259px;width:70px;height:22px;border:1px solid #bdbdbd;background:#fff"></div>
<div class="abs" style="left:1097.8px;top:259px;font-size:12px;line-height:17px;color:#3c8dbc;white-space:nowrap;">Аист Девочка</div>
<div class="abs" style="left:1218px;top:258px;width:49px;height:20px;background:#e6e6e6;border-radius:3px;font-size:12px;font-weight:bold;color:#333;line-height:18px;text-align:center">Товар</div>
<div class="abs" style="left:1302px;top:259px;width:35px;height:18px;background:#e6e6e6;border-radius:3px;font-size:12px;font-weight:bold;color:#333;line-height:18px;text-align:center">Т17</div>
<div class="abs" style="left:1434px;top:258px;width:30px;height:20px;background:#e6e6e6;border-radius:3px;font-size:12px;font-weight:bold;color:#333;line-height:18px;text-align:center">шт</div>
<div class="abs" style="left:1513px;top:258px;width:63px;height:20px;background:#e6e6e6;border-radius:3px;font-size:12px;font-weight:bold;color:#333;line-height:18px;text-align:center">Активен</div>
<div class="abs" style="left:1591.8px;top:259px;font-size:12px;line-height:17px;color:#333;white-space:nowrap;">4600000000121</div>
<svg class="abs" style="left:1678px;top:263px" width="12" height="9" viewBox="0 0 12 9"><path d="M1 4.5 L4.3 7.6 L11 1.2" fill="none" stroke="#3a7f3a" stroke-width="2.4"/></svg>
<div class="abs" style="left:1738.9px;top:259px;font-size:12px;line-height:17px;color:#333;white-space:nowrap;letter-spacing:0">65,00</div>
<svg class="abs" style="left:1771.5px;top:262px" width="8" height="10" viewBox="0 0 8 10"><path d="M2.1 9.2 L2.1 0.7 L4.6 0.7 Q6.7 0.7 6.7 2.8 Q6.7 4.9 4.6 4.9 L0.3 4.9 M0.3 6.9 L4.8 6.9" fill="none" stroke="#333" stroke-width="1.15"/></svg>
<div class="abs" style="left:1738px;top:274px;width:40px;height:0;border-top:1px dashed #888"></div>
<div class="abs" style="left:1789px;top:259px;font-size:12px;line-height:17px;color:#333;white-space:nowrap;">Да</div>
<div class="abs" style="left:836px;top:299px;width:14px;height:2px;background:#e0e0e0"></div>
<div class="abs" style="left:836px;top:304px;width:14px;height:2px;background:#e0e0e0"></div>
<div class="abs" style="left:836px;top:309px;width:14px;height:2px;background:#e0e0e0"></div>
<div class="abs" style="left:866.5px;top:296px;font-size:12px;line-height:17px;color:#333;white-space:nowrap;">2</div>
<div class="abs" style="left:887px;top:300px;width:13px;height:13px;border:1px solid #767676;border-radius:2px;background:#fff"></div>
<svg class="abs" style="left:914px;top:298px" width="20" height="22" viewBox="0 0 20 22"><path d="M10 1.5 Q16 1.5 16 8.5 Q16 14 10.6 18.5 L11.2 20 L8.8 20 L9.4 18.5 Q4 14 4 8.5 Q4 1.5 10 1.5Z" fill="#f9bccb"/><circle cx="8" cy="7" r="1.2" fill="#fff" opacity=".7"/><circle cx="11.5" cy="9.5" r="1.3" fill="#fff" opacity=".6"/></svg>
<div class="abs" style="left:948px;top:296px;width:26px;height:22px;background:#f4f4f4;border:1px solid #ddd;border-radius:3px"></div>
<svg class="abs" style="left:953px;top:300px" width="16" height="14" viewBox="0 0 18 16"><g fill="#333"><path d="M0.2 0.6 L3.2 0.6 Q4 0.6 4.2 1.4 L4.6 3 L17.5 3 Q18 3 17.9 3.6 L17.1 8.6 Q17 9.3 16.3 9.3 L6.3 10.3 L6.5 11.3 L16 11.3 L16 12.8 L5.5 12.8 Q4.8 12.8 4.6 12 L2.4 2.3 L0.2 2.3Z"/><circle cx="6.4" cy="14.4" r="1.5"/><circle cx="14.6" cy="14.4" r="1.5"/></g></svg>
<div class="abs" style="left:976px;top:296px;width:70px;height:22px;border:1px solid #bdbdbd;background:#fff"></div>
<div class="abs" style="left:1097.8px;top:296px;font-size:12px;line-height:17px;color:#3c8dbc;white-space:nowrap;">Девочка</div>
<div class="abs" style="left:1218px;top:295px;width:49px;height:20px;background:#e6e6e6;border-radius:3px;font-size:12px;font-weight:bold;color:#333;line-height:18px;text-align:center">Товар</div>
<div class="abs" style="left:1302px;top:296px;width:35px;height:18px;background:#e6e6e6;border-radius:3px;font-size:12px;font-weight:bold;color:#333;line-height:18px;text-align:center">Т18</div>
<div class="abs" style="left:1434px;top:295px;width:30px;height:20px;background:#e6e6e6;border-radius:3px;font-size:12px;font-weight:bold;color:#333;line-height:18px;text-align:center">шт</div>
<div class="abs" style="left:1513px;top:295px;width:63px;height:20px;background:#e6e6e6;border-radius:3px;font-size:12px;font-weight:bold;color:#333;line-height:18px;text-align:center">Активен</div>
<div class="abs" style="left:1591.8px;top:296px;font-size:12px;line-height:17px;color:#333;white-space:nowrap;">4640000000011</div>
<svg class="abs" style="left:1678px;top:300px" width="12" height="9" viewBox="0 0 12 9"><path d="M1 4.5 L4.3 7.6 L11 1.2" fill="none" stroke="#3a7f3a" stroke-width="2.4"/></svg>
<div class="abs" style="left:1738.9px;top:296px;font-size:12px;line-height:17px;color:#333;white-space:nowrap;letter-spacing:0">55,00</div>
<svg class="abs" style="left:1771.5px;top:299px" width="8" height="10" viewBox="0 0 8 10"><path d="M2.1 9.2 L2.1 0.7 L4.6 0.7 Q6.7 0.7 6.7 2.8 Q6.7 4.9 4.6 4.9 L0.3 4.9 M0.3 6.9 L4.8 6.9" fill="none" stroke="#333" stroke-width="1.15"/></svg>
<div class="abs" style="left:1738px;top:311px;width:40px;height:0;border-top:1px dashed #888"></div>
<div class="abs" style="left:1789px;top:296px;font-size:12px;line-height:17px;color:#333;white-space:nowrap;">Нет</div>
<div class="abs" style="left:836px;top:336px;width:14px;height:2px;background:#e0e0e0"></div>
<div class="abs" style="left:836px;top:341px;width:14px;height:2px;background:#e0e0e0"></div>
<div class="abs" style="left:836px;top:346px;width:14px;height:2px;background:#e0e0e0"></div>
<div class="abs" style="left:866.5px;top:333px;font-size:12px;line-height:17px;color:#333;white-space:nowrap;">3</div>
<div class="abs" style="left:887px;top:337px;width:13px;height:13px;border:1px solid #767676;border-radius:2px;background:#fff"></div>
<svg class="abs" style="left:914px;top:335px" width="20" height="22" viewBox="0 0 20 22"><path d="M10 1.5 Q16 1.5 16 8.5 Q16 14 10.6 18.5 L11.2 20 L8.8 20 L9.4 18.5 Q4 14 4 8.5 Q4 1.5 10 1.5Z" fill="#df2a35"/><circle cx="8" cy="7" r="1.2" fill="#fff" opacity=".7"/><circle cx="11.5" cy="9.5" r="1.3" fill="#fff" opacity=".6"/></svg>
<div class="abs" style="left:948px;top:333px;width:26px;height:22px;background:#f4f4f4;border:1px solid #ddd;border-radius:3px"></div>
<svg class="abs" style="left:953px;top:337px" width="16" height="14" viewBox="0 0 18 16"><g fill="#333"><path d="M0.2 0.6 L3.2 0.6 Q4 0.6 4.2 1.4 L4.6 3 L17.5 3 Q18 3 17.9 3.6 L17.1 8.6 Q17 9.3 16.3 9.3 L6.3 10.3 L6.5 11.3 L16 11.3 L16 12.8 L5.5 12.8 Q4.8 12.8 4.6 12 L2.4 2.3 L0.2 2.3Z"/><circle cx="6.4" cy="14.4" r="1.5"/><circle cx="14.6" cy="14.4" r="1.5"/></g></svg>
<div class="abs" style="left:976px;top:333px;width:70px;height:22px;border:1px solid #bdbdbd;background:#fff"></div>
<div class="abs" style="left:1097.8px;top:333px;font-size:12px;line-height:17px;color:#3c8dbc;white-space:nowrap;">Крупные сердца<br>(красный)</div>
<div class="abs" style="left:1218px;top:332px;width:49px;height:20px;background:#e6e6e6;border-radius:3px;font-size:12px;font-weight:bold;color:#333;line-height:18px;text-align:center">Товар</div>
<div class="abs" style="left:1302px;top:333px;width:35px;height:18px;background:#e6e6e6;border-radius:3px;font-size:12px;font-weight:bold;color:#333;line-height:18px;text-align:center">Т56</div>
<div class="abs" style="left:1434px;top:332px;width:30px;height:20px;background:#e6e6e6;border-radius:3px;font-size:12px;font-weight:bold;color:#333;line-height:18px;text-align:center">шт</div>
<div class="abs" style="left:1513px;top:332px;width:63px;height:20px;background:#e6e6e6;border-radius:3px;font-size:12px;font-weight:bold;color:#333;line-height:18px;text-align:center">Активен</div>
<div class="abs" style="left:1591.8px;top:333px;font-size:12px;line-height:17px;color:#333;white-space:nowrap;">4640000000066</div>
<svg class="abs" style="left:1678px;top:337px" width="12" height="9" viewBox="0 0 12 9"><path d="M1 4.5 L4.3 7.6 L11 1.2" fill="none" stroke="#3a7f3a" stroke-width="2.4"/></svg>
<div class="abs" style="left:1738.9px;top:333px;font-size:12px;line-height:17px;color:#333;white-space:nowrap;letter-spacing:0">55,00</div>
<svg class="abs" style="left:1771.5px;top:336px" width="8" height="10" viewBox="0 0 8 10"><path d="M2.1 9.2 L2.1 0.7 L4.6 0.7 Q6.7 0.7 6.7 2.8 Q6.7 4.9 4.6 4.9 L0.3 4.9 M0.3 6.9 L4.8 6.9" fill="none" stroke="#333" stroke-width="1.15"/></svg>
<div class="abs" style="left:1738px;top:348px;width:40px;height:0;border-top:1px dashed #888"></div>
<div class="abs" style="left:1789px;top:333px;font-size:12px;line-height:17px;color:#333;white-space:nowrap;">Нет</div>
<div class="abs" style="left:836px;top:382px;width:14px;height:2px;background:#e0e0e0"></div>
<div class="abs" style="left:836px;top:387px;width:14px;height:2px;background:#e0e0e0"></div>
<div class="abs" style="left:836px;top:392px;width:14px;height:2px;background:#e0e0e0"></div>
<div class="abs" style="left:866.5px;top:379px;font-size:12px;line-height:17px;color:#333;white-space:nowrap;">4</div>
<div class="abs" style="left:887px;top:383px;width:13px;height:13px;border:1px solid #767676;border-radius:2px;background:#fff"></div>
<svg class="abs" style="left:914px;top:381px" width="20" height="22" viewBox="0 0 20 22"><path d="M10 1.5 Q16 1.5 16 8.5 Q16 14 10.6 18.5 L11.2 20 L8.8 20 L9.4 18.5 Q4 14 4 8.5 Q4 1.5 10 1.5Z" fill="#d9a6ea"/><circle cx="8" cy="7" r="1.2" fill="#fff" opacity=".7"/><circle cx="11.5" cy="9.5" r="1.3" fill="#fff" opacity=".6"/></svg>
<div class="abs" style="left:948px;top:379px;width:26px;height:22px;background:#f4f4f4;border:1px solid #ddd;border-radius:3px"></div>
<svg class="abs" style="left:953px;top:383px" width="16" height="14" viewBox="0 0 18 16"><g fill="#333"><path d="M0.2 0.6 L3.2 0.6 Q4 0.6 4.2 1.4 L4.6 3 L17.5 3 Q18 3 17.9 3.6 L17.1 8.6 Q17 9.3 16.3 9.3 L6.3 10.3 L6.5 11.3 L16 11.3 L16 12.8 L5.5 12.8 Q4.8 12.8 4.6 12 L2.4 2.3 L0.2 2.3Z"/><circle cx="6.4" cy="14.4" r="1.5"/><circle cx="14.6" cy="14.4" r="1.5"/></g></svg>
<div class="abs" style="left:976px;top:379px;width:70px;height:22px;border:1px solid #bdbdbd;background:#fff"></div>
<div class="abs" style="left:1097.8px;top:379px;font-size:12px;line-height:17px;color:#3c8dbc;white-space:nowrap;">Цветы фиолетовый</div>
<div class="abs" style="left:1218px;top:378px;width:49px;height:20px;background:#e6e6e6;border-radius:3px;font-size:12px;font-weight:bold;color:#333;line-height:18px;text-align:center">Товар</div>
<div class="abs" style="left:1302px;top:379px;width:35px;height:18px;background:#e6e6e6;border-radius:3px;font-size:12px;font-weight:bold;color:#333;line-height:18px;text-align:center">Т19</div>
<div class="abs" style="left:1434px;top:378px;width:30px;height:20px;background:#e6e6e6;border-radius:3px;font-size:12px;font-weight:bold;color:#333;line-height:18px;text-align:center">шт</div>
<div class="abs" style="left:1513px;top:378px;width:63px;height:20px;background:#e6e6e6;border-radius:3px;font-size:12px;font-weight:bold;color:#333;line-height:18px;text-align:center">Активен</div>
<div class="abs" style="left:1591.8px;top:379px;font-size:12px;line-height:17px;color:#333;white-space:nowrap;">4670000000056</div>
<svg class="abs" style="left:1678px;top:383px" width="12" height="9" viewBox="0 0 12 9"><path d="M1 4.5 L4.3 7.6 L11 1.2" fill="none" stroke="#3a7f3a" stroke-width="2.4"/></svg>
<div class="abs" style="left:1738.9px;top:379px;font-size:12px;line-height:17px;color:#333;white-space:nowrap;letter-spacing:0">65,00</div>
<svg class="abs" style="left:1771.5px;top:382px" width="8" height="10" viewBox="0 0 8 10"><path d="M2.1 9.2 L2.1 0.7 L4.6 0.7 Q6.7 0.7 6.7 2.8 Q6.7 4.9 4.6 4.9 L0.3 4.9 M0.3 6.9 L4.8 6.9" fill="none" stroke="#333" stroke-width="1.15"/></svg>
<div class="abs" style="left:1738px;top:394px;width:40px;height:0;border-top:1px dashed #888"></div>
<div class="abs" style="left:1789px;top:379px;font-size:12px;line-height:17px;color:#333;white-space:nowrap;">Да</div>
<div class="abs" style="left:836px;top:419px;width:14px;height:2px;background:#e0e0e0"></div>
<div class="abs" style="left:836px;top:424px;width:14px;height:2px;background:#e0e0e0"></div>
<div class="abs" style="left:836px;top:429px;width:14px;height:2px;background:#e0e0e0"></div>
<div class="abs" style="left:866.5px;top:416px;font-size:12px;line-height:17px;color:#333;white-space:nowrap;">5</div>
<div class="abs" style="left:887px;top:420px;width:13px;height:13px;border:1px solid #767676;border-radius:2px;background:#fff"></div>
<svg class="abs" style="left:913px;top:418px" width="22" height="22" viewBox="0 0 22 22"><circle cx="7" cy="9" r="5" fill="#7fb6e8"/><circle cx="15" cy="9" r="5" fill="#5a8ee0"/><circle cx="11" cy="6" r="4.5" fill="#a9d0f0"/><circle cx="5" cy="13" r="4" fill="#8ec2ec"/><circle cx="17" cy="13" r="4" fill="#8ec2ec"/><path d="M11 20 Q6 15.5 6.5 12 Q7 8.5 11 8.5 Q15 8.5 15.5 12 Q16 15.5 11 20Z" fill="#2142d6"/><circle cx="11" cy="13" r="1.5" fill="#9fb4f4"/></svg>
<div class="abs" style="left:948px;top:416px;width:26px;height:22px;background:#f4f4f4;border:1px solid #ddd;border-radius:3px"></div>
<svg class="abs" style="left:953px;top:420px" width="16" height="14" viewBox="0 0 18 16"><g fill="#333"><path d="M0.2 0.6 L3.2 0.6 Q4 0.6 4.2 1.4 L4.6 3 L17.5 3 Q18 3 17.9 3.6 L17.1 8.6 Q17 9.3 16.3 9.3 L6.3 10.3 L6.5 11.3 L16 11.3 L16 12.8 L5.5 12.8 Q4.8 12.8 4.6 12 L2.4 2.3 L0.2 2.3Z"/><circle cx="6.4" cy="14.4" r="1.5"/><circle cx="14.6" cy="14.4" r="1.5"/></g></svg>
<div class="abs" style="left:976px;top:416px;width:70px;height:22px;border:1px solid #bdbdbd;background:#fff"></div>
<div class="abs" style="left:1097.8px;top:416px;font-size:12px;line-height:17px;color:#3c8dbc;white-space:nowrap;">С рождением<br>малыша</div>
<div class="abs" style="left:1218px;top:415px;width:49px;height:20px;background:#e6e6e6;border-radius:3px;font-size:12px;font-weight:bold;color:#333;line-height:18px;text-align:center">Товар</div>
<div class="abs" style="left:1302px;top:416px;width:35px;height:18px;background:#e6e6e6;border-radius:3px;font-size:12px;font-weight:bold;color:#333;line-height:18px;text-align:center">Т16</div>
<div class="abs" style="left:1434px;top:415px;width:30px;height:20px;background:#e6e6e6;border-radius:3px;font-size:12px;font-weight:bold;color:#333;line-height:18px;text-align:center">шт</div>
<div class="abs" style="left:1513px;top:415px;width:63px;height:20px;background:#e6e6e6;border-radius:3px;font-size:12px;font-weight:bold;color:#333;line-height:18px;text-align:center">Активен</div>
<div class="abs" style="left:1591.8px;top:416px;font-size:12px;line-height:17px;color:#333;white-space:nowrap;">4670000000100</div>
<svg class="abs" style="left:1678px;top:420px" width="12" height="9" viewBox="0 0 12 9"><path d="M1 4.5 L4.3 7.6 L11 1.2" fill="none" stroke="#3a7f3a" stroke-width="2.4"/></svg>
<div class="abs" style="left:1738.9px;top:416px;font-size:12px;line-height:17px;color:#333;white-space:nowrap;letter-spacing:0">55,00</div>
<svg class="abs" style="left:1771.5px;top:419px" width="8" height="10" viewBox="0 0 8 10"><path d="M2.1 9.2 L2.1 0.7 L4.6 0.7 Q6.7 0.7 6.7 2.8 Q6.7 4.9 4.6 4.9 L0.3 4.9 M0.3 6.9 L4.8 6.9" fill="none" stroke="#333" stroke-width="1.15"/></svg>
<div class="abs" style="left:1738px;top:431px;width:40px;height:0;border-top:1px dashed #888"></div>
<div class="abs" style="left:1789px;top:416px;font-size:12px;line-height:17px;color:#333;white-space:nowrap;">Да</div>
<div class="abs" style="left:1795px;top:479px;width:100px;text-align:right;font-size:12px;line-height:17px;color:#6f7a87"><b>1</b> - <b>5</b> из <b>5</b></div>
</body></html>
